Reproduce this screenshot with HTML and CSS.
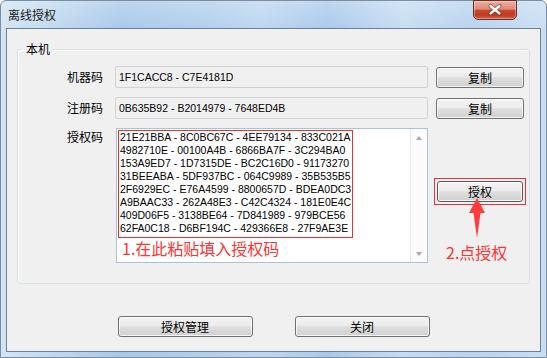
FILE: index.html
```html
<!DOCTYPE html>
<html lang="zh-CN">
<head>
<meta charset="utf-8">
<title>离线授权</title>
<link rel="stylesheet" href="styles.css">
</head>
<body>
<div class="window">
  <div class="titlebar">
    <span class="title">离线授权</span>
    <button class="close" aria-label="关闭">
      <svg width="42" height="19" viewBox="0 0 42 19">
        <path d="M16.5 5 L25.5 12.5 M25.5 5 L16.5 12.5" stroke="#5a1c12" stroke-width="4.2" stroke-linecap="round" opacity=".55" fill="none"/>
        <path d="M16.5 5 L25.5 12.5 M25.5 5 L16.5 12.5" stroke="#ffffff" stroke-width="2.3" stroke-linecap="round" fill="none"/>
      </svg>
    </button>
  </div>
  <div class="client">
    <fieldset class="group">
      <legend>本机</legend>
      <div class="grid">
        <label class="lbl">机器码</label>
        <div class="field">1F1CACC8 - C7E4181D</div>
        <button class="btn">复制</button>

        <label class="lbl">注册码</label>
        <div class="field">0B635B92 - B2014979 - 7648ED4B</div>
        <button class="btn">复制</button>

        <label class="lbl lbl-top">授权码</label>
        <div class="memo">
          <div class="memo-body">
            <div class="codes">
              <div>21E21BBA - 8C0BC67C - 4EE79134 - 833C021A</div>
              <div>4982710E - 00100A4B - 6866BA7F - 3C294BA0</div>
              <div>153A9ED7 - 1D7315DE - BC2C16D0 - 91173270</div>
              <div>31BEEABA - 5DF937BC - 064C9989 - 35B535B5</div>
              <div>2F6929EC - E76A4599 - 8800657D - BDEA0DC3</div>
              <div>A9BAAC33 - 262A48E3 - C42C4324 - 181E0E4C</div>
              <div>409D06F5 - 3138BE64 - 7D841989 - 979BCE56</div>
              <div>62FA0C18 - D6BF194C - 429366E8 - 27F9AE3E</div>
            </div>
            <div class="hint hint1">1.在此粘贴填入授权码</div>
          </div>
          <div class="scrollbar">
            <span class="sbtn"><span class="tri tri-up"></span></span>
            <span class="sbtn"><span class="tri tri-down"></span></span>
          </div>
        </div>
        <div class="auth-col">
          <div class="mark"><button class="btn btn-default">授权</button></div>
          <svg class="pointer" width="16" height="40" viewBox="0 0 16 40">
            <polygon points="8,0 16,15 11.5,15 8,40 4.5,15 0,15" fill="#ff3b3b"/>
          </svg>
          <div class="hint hint2">2.点授权</div>
        </div>
      </div>
    </fieldset>
    <div class="footer">
      <button class="btn btn-wide">授权管理</button>
      <button class="btn btn-wide">关闭</button>
    </div>
  </div>
</div>
</body>
</html>
```

FILE: styles.css
```css
* { box-sizing: border-box; }

html, body {
  margin: 0;
  padding: 0;
}

body {
  width: 547px;
  height: 358px;
  overflow: hidden;
  background: #ffffff;
  font-family: "Noto Sans CJK SC", "Liberation Sans", sans-serif;
  font-size: 12px;
  color: #000;
}

.window {
  width: 547px;
  height: 358px;
  display: flex;
  flex-direction: column;
  border: 1px solid #7b8da2;
  border-radius: 6px 6px 0 0;
  background:
    linear-gradient(to bottom, rgba(255,255,255,0.25), rgba(255,255,255,0) 30px),
    linear-gradient(to right, #d3e4f4 0%, #c0d8ef 10%, #a8c8e8 22%, #b2cfec 38%, #bcd6ef 48%, #aac9ea 60%, #c6dcf2 74%, #b7d3ee 86%, #c9def3 100%);
}

.titlebar {
  height: 27px;
  display: flex;
  align-items: flex-start;
  padding-left: 7px;
  flex: none;
}

.title {
  line-height: 27px;
  font-size: 12px;
  color: #1a1a1a;
}

.close {
  width: 44px;
  height: 20px;
  margin: -1px 29px 0 auto;
  padding: 0;
  border: 1px solid #6e2a20;
  border-radius: 0 0 5px 5px;
  background: linear-gradient(to bottom, #eab0a2 0%, #de8b78 45%, #c9492f 52%, #bf3a22 78%, #d4624a 100%);
  box-shadow: inset 0 0 0 1px rgba(255,255,255,0.35);
  display: flex;
  align-items: center;
  justify-content: center;
}

.close svg { display: block; }

.client {
  flex: 1;
  margin: 0 5px 5px 5px;
  border: 1px solid #6f8094;
  background: #f0f0f0;
  display: flex;
  flex-direction: column;
  padding: 0 10px 14px 10px;
}

.group {
  margin: 12px 0 0 0;
  padding: 0 0 20px 0;
  border: 1px solid #d5dfe5;
  border-radius: 3px;
  box-shadow: inset 1px 1px 0 #ffffff;
  min-width: 0;
}

.group legend {
  margin-left: 3px;
  padding: 0 3px 0 5px;
  line-height: 16px;
  font-size: 12px;
}

.grid {
  margin-top: 9px;
  display: grid;
  grid-template-columns: 89px 313px 88px;
  grid-template-rows: 22px 22px 135px;
  column-gap: 8px;
  row-gap: 9px;
}

.lbl {
  text-align: right;
  padding-right: 4px;
  line-height: 22px;
  font-size: 12px;
}

.lbl-top {
  line-height: 16px;
  padding-top: 1px;
}

.field {
  height: 22px;
  border: 1px solid #d2d2d2;
  border-radius: 2px;
  background: #f0f0f0;
  padding-left: 3px;
  font-family: "Liberation Sans", sans-serif;
  font-size: 10.5px;
  line-height: 20px;
  white-space: nowrap;
}

.btn {
  height: 21px;
  align-self: end;
  padding: 0;
  border: 1px solid #707070;
  border-radius: 3px;
  background: linear-gradient(to bottom, #f3f3f3 0%, #ececec 45%, #dedede 52%, #d0d0d0 100%);
  box-shadow: inset 0 0 0 1px rgba(255,255,255,0.75);
  font-family: "Noto Sans CJK SC", sans-serif;
  font-size: 12px;
  line-height: 19px;
  color: #000;
}

.btn-wide {
  width: 135px;
}

.btn-default {
  width: 100%;
  display: block;
  border-color: #5a5a5a;
}

.memo {
  margin-left: 1px;
  border: 1px solid #aac2da;
  background: #ffffff;
  display: flex;
  min-width: 0;
}

.memo-body {
  flex: 1;
  padding: 1px 0 0 1px;
  min-width: 0;
}

.codes {
  width: max-content;
  border: 1px solid #ee2f2f;
  padding: 0 1px 2px 1px;
  font-family: "Liberation Sans", sans-serif;
  font-size: 10.5px;
  line-height: 13px;
  white-space: nowrap;
}

.hint {
  color: #ff3333;
  font-size: 16px;
  line-height: 20px;
  white-space: nowrap;
}

.hint1 {
  padding-left: 4px;
}

.scrollbar {
  width: 17px;
  border-left: 1px solid #e8e8e8;
  background: #fbfbfb;
  display: flex;
  flex-direction: column;
  justify-content: space-between;
}

.sbtn {
  height: 17px;
  display: flex;
  align-items: center;
  justify-content: center;
}

.tri {
  width: 0;
  height: 0;
  border-left: 3.5px solid transparent;
  border-right: 3.5px solid transparent;
}

.tri-up { border-bottom: 4px solid #a9a9a9; }
.tri-down { border-top: 4px solid #a9a9a9; }

.auth-col {
  position: relative;
}

.mark {
  margin: 50px -2px 0 -2px;
  border: 1px solid #ee2f2f;
  padding: 2px;
}

.pointer {
  position: absolute;
  left: 33px;
  top: 70px;
  display: block;
}

.hint2 {
  margin-top: 37px;
  padding-left: 10px;
}

.footer {
  margin-top: auto;
  display: flex;
  justify-content: center;
  gap: 42px;
}
```
